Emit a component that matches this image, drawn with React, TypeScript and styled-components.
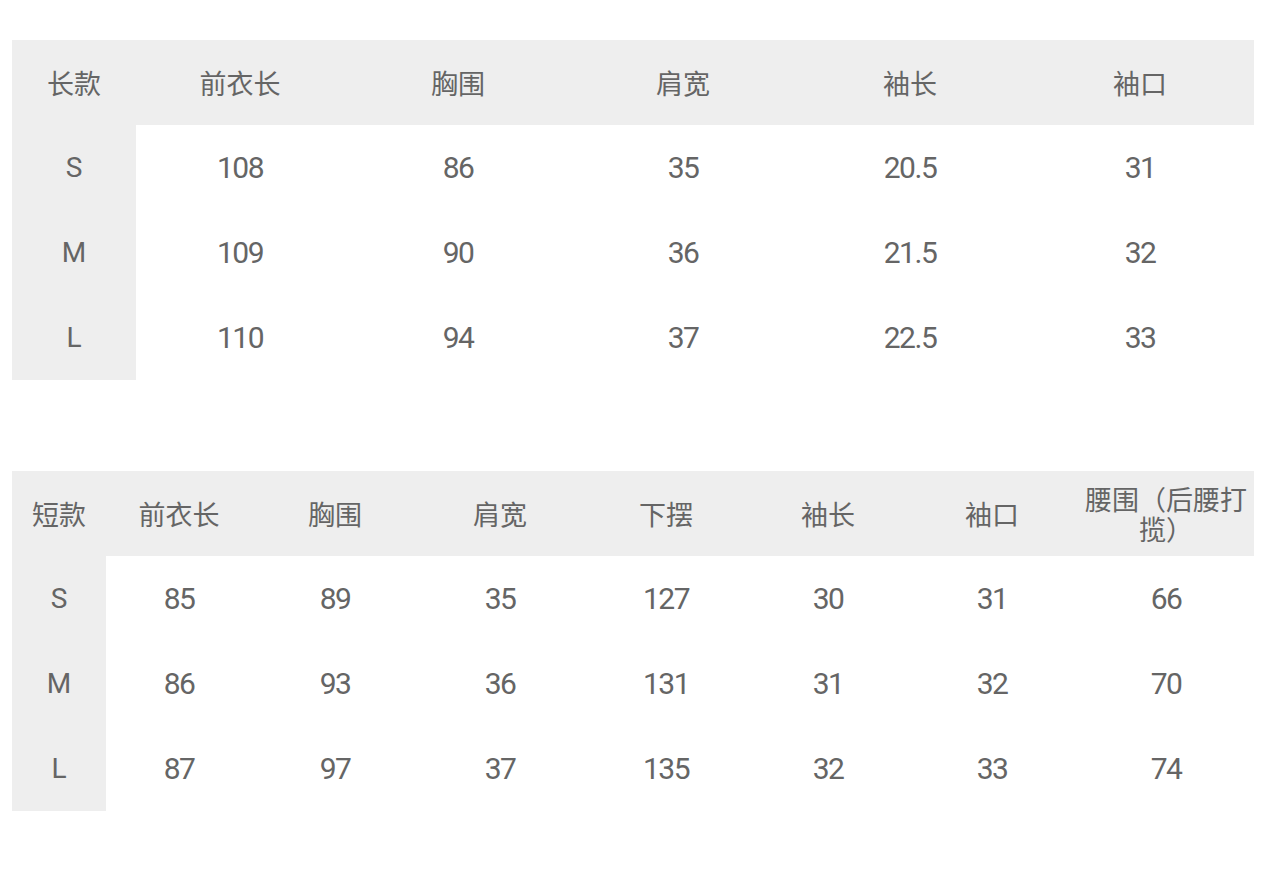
import React from "react";
import styled, { createGlobalStyle } from "styled-components";

const Global = createGlobalStyle`
  body {
    margin: 0;
    background: #ffffff;
    font-family: "Noto Sans CJK SC", "Noto Sans", sans-serif;
  }
`;

const Page = styled.div`
  display: flex;
  flex-direction: column;
  gap: 91px;
  padding: 40px 0 0 12px;
`;

const Table = styled.table`
  width: 1242px;
  border-collapse: collapse;
  border-spacing: 0;
  table-layout: fixed;
  color: #656565;
`;

const Col = styled.col<{ $w: number }>`
  width: ${({ $w }) => $w}px;
`;

const HeadRow = styled.tr`
  background: #eeeeee;
`;

const HeadCell = styled.th`
  height: 85px;
  padding: 0;
  font-weight: 400;
  font-size: 27px;
  line-height: 30px;
  text-align: center;
  vertical-align: middle;
  font-family: "Noto Sans CJK SC", sans-serif;
`;

const SizeCell = styled.td`
  height: 85px;
  padding: 0;
  background: #eeeeee;
  text-align: center;
  vertical-align: middle;
  font-family: Roboto, "Noto Sans", sans-serif;
  font-size: 28px;
`;

const ValueCell = styled.td`
  height: 85px;
  padding: 0;
  text-align: center;
  vertical-align: middle;
  font-family: Roboto, "Noto Sans", sans-serif;
  font-size: 30px;
  letter-spacing: -1.5px;
`;

type Spec = {
  widths: number[];
  head: string[];
  rows: string[][];
};

const longSpec: Spec = {
  widths: [124, 208, 228, 222, 232, 228],
  head: ["长款", "前衣长", "胸围", "肩宽", "袖长", "袖口"],
  rows: [
    ["S", "108", "86", "35", "20.5", "31"],
    ["M", "109", "90", "36", "21.5", "32"],
    ["L", "110", "94", "37", "22.5", "33"],
  ],
};

const shortSpec: Spec = {
  widths: [94, 146, 166, 164, 168, 156, 172, 176],
  head: ["短款", "前衣长", "胸围", "肩宽", "下摆", "袖长", "袖口", "腰围（后腰打揽）"],
  rows: [
    ["S", "85", "89", "35", "127", "30", "31", "66"],
    ["M", "86", "93", "36", "131", "31", "32", "70"],
    ["L", "87", "97", "37", "135", "32", "33", "74"],
  ],
};

const SizeTable = ({ spec }: { spec: Spec }) => (
  <Table>
    <colgroup>
      {spec.widths.map((w, i) => (
        <Col key={i} $w={w} />
      ))}
    </colgroup>
    <thead>
      <HeadRow>
        {spec.head.map((h) => (
          <HeadCell key={h}>{h}</HeadCell>
        ))}
      </HeadRow>
    </thead>
    <tbody>
      {spec.rows.map((row) => (
        <tr key={row[0]}>
          <SizeCell>{row[0]}</SizeCell>
          {row.slice(1).map((v, i) => (
            <ValueCell key={i}>{v}</ValueCell>
          ))}
        </tr>
      ))}
    </tbody>
  </Table>
);

export default function App() {
  return (
    <>
      <Global />
      <Page>
        <SizeTable spec={longSpec} />
        <SizeTable spec={shortSpec} />
      </Page>
    </>
  );
}
